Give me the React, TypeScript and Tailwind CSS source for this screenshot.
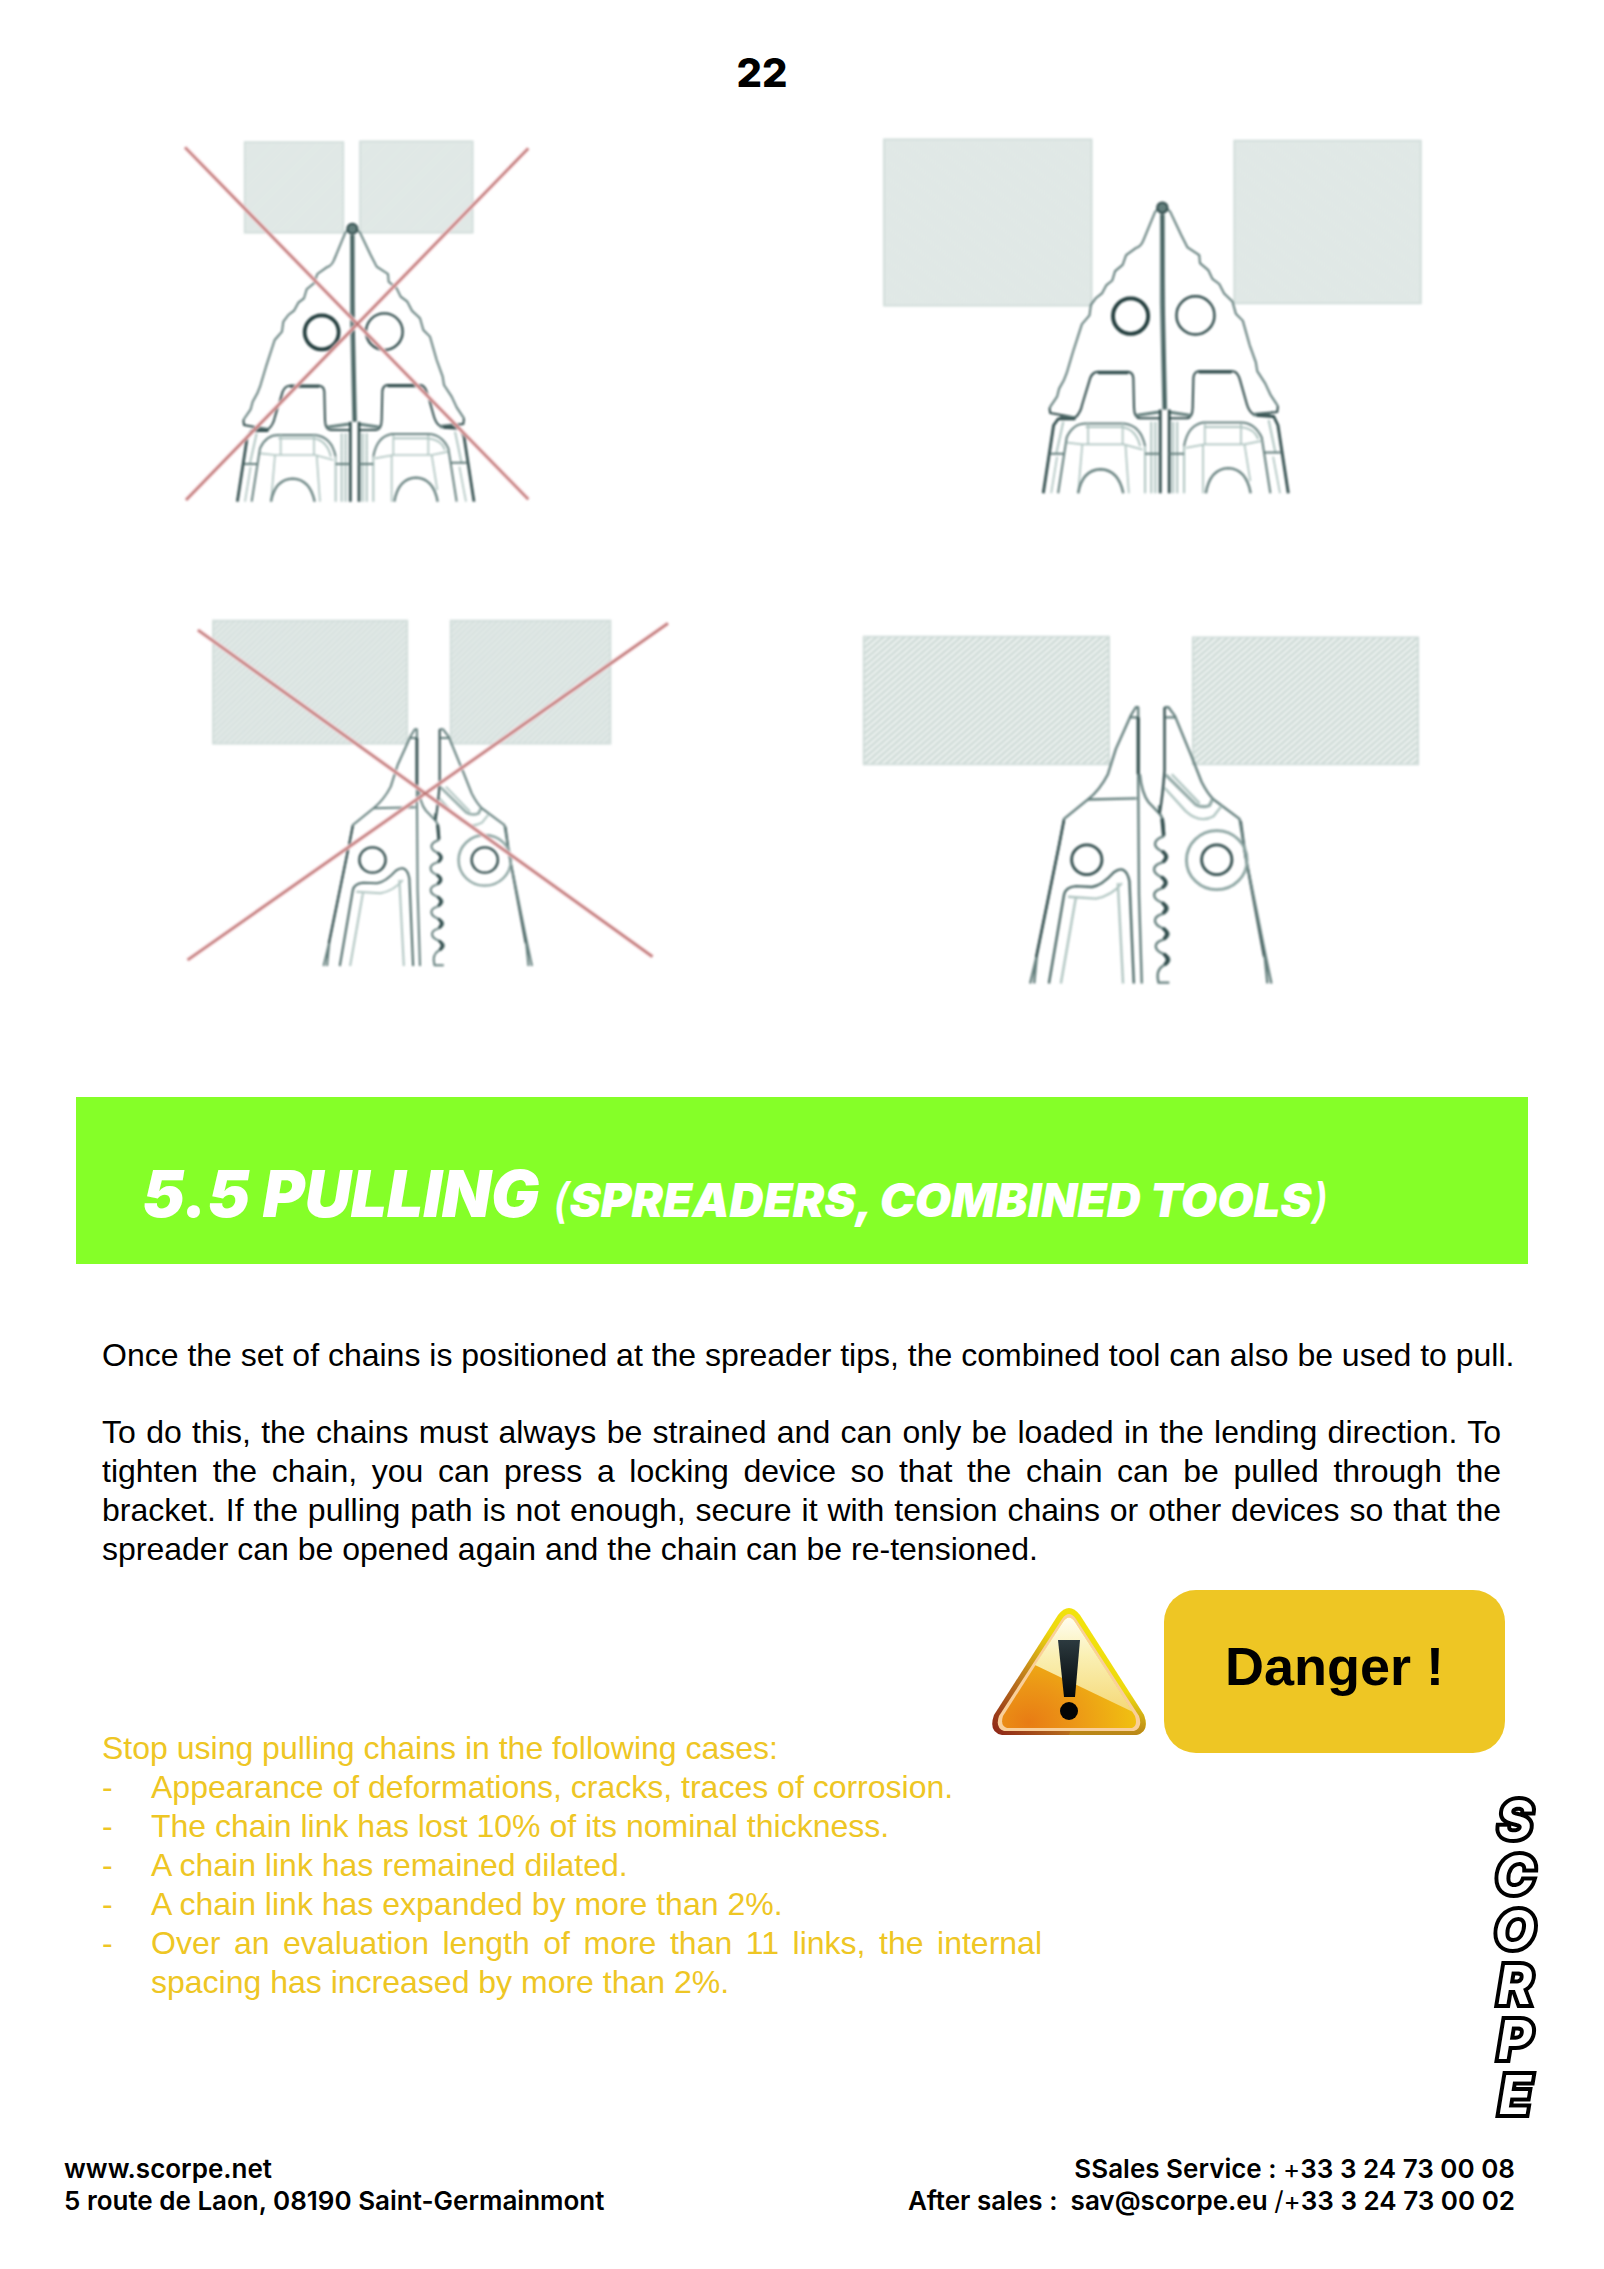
import React from "react";

const INK = "#647f7d";
const DARK = "#2f4b4b";
const LIGHT = "#b0c5c1";

function ClosedTips({ transform }: { transform?: string }) {
  return (
    <g transform={transform} fill="none" stroke={INK} strokeWidth="6" strokeLinejoin="round">
      <path d="M575 318 L556 338 L522 420 Q515 438 500 442 L472 462 L462 490 L440 508 L432 535 L415 548 L402 572 L385 585 L370 605 L366 635 L344 660 L318 740 L300 800 L292 820 L278 845 L272 868 L250 900" />
      <path d="M578 318 L600 338 L632 405 L650 440 L684 462 L686 485 L710 505 L722 530 L742 545 L756 572 L780 595 L790 630 L810 650 L830 720 L848 770 L852 795 L875 830 L890 862 L912 895" />
      <path d="M250 900 L252 915 L325 928 Q340 915 345 890 L368 815 Q375 797 390 797 H478 Q492 799 493 815 L495 900 Q496 930 512 930 H568" stroke={DARK} />
      <path d="M912 895 L910 912 L840 918 Q828 910 822 890 L802 820 Q795 795 780 795 H682 Q668 797 667 815 L665 900 Q664 930 648 930 H595" stroke={DARK} />
      <path d="M390 799 H478 M682 797 H778" stroke={DARK} strokeWidth="9" />
      <path d="M280 928 H325 M840 920 H890 M500 922 L568 912 M660 922 L595 912" strokeWidth="9" />
      <circle cx="577" cy="326" r="15" fill={INK} stroke={DARK} />
      <path d="M577 345 V600 L584 905" strokeWidth="14" />
      <path d="M577 345 L581 600 L584 905" stroke={DARK} strokeWidth="4" />
      <path d="M571 905 V1145 M597 905 V1145" stroke={DARK} strokeWidth="8" />
      <circle cx="485" cy="637" r="51" stroke="#1f3a3a" strokeWidth="11" />
      <circle cx="673" cy="635" r="55" stroke={DARK} strokeWidth="7" />
      <path d="M325 932 H275 L262 950 L232 1145 M850 922 L900 925 L912 950 L942 1145" stroke={DARK} strokeWidth="8" />
      <path d="M275 1145 L300 985 Q318 945 355 945 H465 Q515 950 527 1010 M890 1145 L865 985 Q845 943 805 942 H695 Q650 950 640 1010" />
      <path d="M290 940 L270 1030 M885 935 L905 1030 M355 955 H460 Q500 960 513 1010 M700 955 H805 Q845 960 855 990 M545 940 V1145 M620 940 V1145 M557 940 V1145 M608 940 V1145 M527 1010 V1145 M640 1010 V1145" stroke={LIGHT} />
      <path d="M252 1032 H292 M527 1032 H570 M597 1032 H640 M872 1028 H920" />
      <path d="M362 945 V1005 M462 945 V1005 M300 1000 L345 1005 H465 L520 1020 M345 1005 L333 1145 M470 1005 L480 1145 M700 945 V1005 M805 945 V1005 M645 1015 L700 1005 H815 L865 995 M695 1005 V1145 M815 1005 L832 1110 M255 1145 L272 1040 M918 1145 L898 1040" stroke={LIGHT} strokeWidth="5" />
      <path d="M333 1145 Q345 1078 398 1076 Q450 1078 464 1145 M703 1145 Q715 1075 768 1073 Q820 1075 833 1145" strokeWidth="7" />
    </g>
  );
}

function OpenTips({ transform }: { transform?: string }) {
  return (
    <g transform={transform} fill="none" stroke={INK} strokeWidth="6" strokeLinejoin="round">
      <path d="M748 418 H740 L728 438 L690 525 L670 590 Q650 630 620 655 L560 705 L548 770 L492 1055 L475 1128 M492 1055 L485 1128" />
      <path d="M560 708 L548 770 L490 1060 M1003 710 L1015 800 L1062 1060" stroke={DARK} />
      <path d="M726 444 H748 M815 444 H838 M620 655 L742 652" />
      <path d="M746 418 V620 L748 900 L755 1128" />
      <path d="M746 444 V590" stroke={DARK} strokeWidth="8" />
      <path d="M750 590 Q755 640 772 662 L800 692 L798 670" stroke={INK} />
      <path d="M812 418 H822 L838 440 L880 545 L905 610 Q920 640 935 655 L1000 705 L1015 800 L1065 1055 L1080 1128 M1063 1055 L1070 1128" />
      <path d="M812 418 V580 Q808 640 800 690" stroke={DARK} />
      <path d="M800 692 Q812 705 809 750 c-28 10 -26 28 -4 38 s14 24 -2 30 c-24 8 -22 26 0 36 s16 24 0 30 c-24 8 -22 26 2 36 s16 24 0 30 c-24 8 -22 26 2 36 s16 24 0 30 c-24 8 -22 26 2 36 s16 24 0 30 q-20 12 -12 44 H824" />
      <path d="M806 788 q18 14 2 28 M804 854 q20 14 2 28 M806 920 q18 14 2 28 M808 986 q18 14 2 28 M810 1052 q18 14 2 28 M806 704 L810 748" stroke={DARK} strokeWidth="9" />
      <path d="M815 592 L890 668 Q908 678 925 670 L932 655" stroke="#93aaa7" strokeWidth="8" />
      <path d="M812 625 L865 685 Q900 718 935 698 L955 672 M830 590 L900 665" stroke={LIGHT} />
      <circle cx="617" cy="810" r="38" stroke={DARK} strokeWidth="7" />
      <circle cx="943" cy="810" r="38" stroke={DARK} strokeWidth="7" />
      <circle cx="943" cy="811" r="76" strokeWidth="7" stroke="#8aa3a0" />
      <path d="M522 1128 L560 900 Q564 880 590 878 L630 880 Q655 876 685 842 Q715 820 724 865 L735 1128" stroke="#4d6a68" />
      <path d="M552 1128 L590 905 M570 905 L640 910 Q680 902 705 870 M695 870 L708 1128" stroke={LIGHT} />
    </g>
  );
}

function Blocks({ id, d, gap, base, tone }: { id: string; d: string; gap: number; base: string; tone: string }) {
  return (
    <>
      <defs>
        <pattern id={id} width={gap} height={gap} patternUnits="userSpaceOnUse" patternTransform="rotate(45)">
          <rect width={gap} height={gap} fill={base} />
          <rect width={gap / 2} height={gap} fill={tone} />
        </pattern>
      </defs>
      <path d={d} fill={`url(#${id})`} stroke="#d0dcd9" strokeWidth="5" />
    </>
  );
}

function Cross({ d }: { d: string }) {
  return (
    <>
      <path d={d} stroke="#f8d5da" strokeWidth="13" />
      <path d={d} stroke="#b9716f" strokeWidth="6" />
    </>
  );
}

function WarningSign() {
  return (
    <svg viewBox="0 0 154 127" className="h-[127px] w-[154px] shrink-0" role="img" aria-label="Warning">
      <defs>
        <linearGradient id="rim" x1="0" y1="1" x2="0.75" y2="0.3">
          <stop offset="0" stopColor="#8c2318" />
          <stop offset="0.45" stopColor="#c07d1c" />
          <stop offset="0.8" stopColor="#ecd60e" />
          <stop offset="1" stopColor="#f2e20c" />
        </linearGradient>
        <linearGradient id="rimRight" x1="0" y1="0" x2="0" y2="1">
          <stop offset="0.5" stopColor="#c59a1a" stopOpacity="0" />
          <stop offset="1" stopColor="#b98618" />
        </linearGradient>
        <radialGradient id="face" cx="0.2" cy="0.95" r="0.85">
          <stop offset="0" stopColor="#e87c14" />
          <stop offset="0.4" stopColor="#ec9716" />
          <stop offset="1" stopColor="#f1c511" />
        </radialGradient>
        <linearGradient id="gloss" x1="0" y1="0" x2="0" y2="1">
          <stop offset="0" stopColor="#fffdf0" />
          <stop offset="0.4" stopColor="#faf0b4" />
          <stop offset="1" stopColor="#f5d877" />
        </linearGradient>
        <linearGradient id="mark" x1="0" y1="0" x2="0" y2="1">
          <stop offset="0" stopColor="#2c3a3f" />
          <stop offset="1" stopColor="#04080a" />
        </linearGradient>
      </defs>
      <path d="M66 7 Q77 -7 88 7 L152 107 Q158 124 144 127 H10 Q-4 124 2 107 Z" fill="url(#rim)" />
      <path d="M110 40 L152 107 Q158 124 144 127 H77 Z" fill="url(#rimRight)" />
      <path d="M70 11 Q77 1 84 11 L147 108 Q151 120 142 123 H12 Q3 120 7 108 Z" fill="#f9cf9a" />
      <path d="M71 14 Q77 5 83 14 L143 108 Q146 118 140 120 H15 Q8 118 11 108 Z" fill="url(#face)" />
      <path d="M71 14 Q77 5 83 14 L141 104 L43 57 Z" fill="url(#gloss)" />
      <path d="M66 32 H88 L83 89 H72 Z" fill="url(#mark)" />
      <circle cx="77" cy="103" r="9" fill="#020405" />
    </svg>
  );
}

const cases = [
  "Appearance of deformations, cracks, traces of corrosion.",
  "The chain link has lost 10% of its nominal thickness.",
  "A chain link has remained dilated.",
  "A chain link has expanded by more than 2%.",
  "Over an evaluation length of more than 11 links, the internal spacing has increased by more than 2%.",
];

export default function App() {
  return (
    <main className="flex min-h-screen flex-col bg-white font-['Liberation_Sans',Arial,sans-serif] text-black">
      <header className="flex h-[120px] items-center justify-center pt-[26px] pr-20 font-['Inter',sans-serif] text-[40px] leading-none font-extrabold">
        22
      </header>

      <section className="flex flex-col gap-[70px] pr-[164px] pl-40" aria-label="Positioning of the tips">
        <div className="flex justify-between">
          <svg viewBox="0 0 1200 1200" className="h-[400px] w-[400px] blur-[1px]" role="img" aria-label="Incorrect: blocks held at the tip end">
            <Blocks id="h1" gap={8} base="#e4ebe9" tone="#dde6e3" d="M254 66 H550 V338 H254 Z M600 64 H938 V338 H600 Z" />
            <ClosedTips />
            <Cross d="M75 82 L1105 1138 M1105 85 L78 1140" />
          </svg>
          <svg viewBox="0 0 1568 1200" preserveAspectRatio="none" className="h-[400px] w-[580px] blur-[1px]" role="img" aria-label="Correct: blocks held along the jaws">
            <Blocks id="h2" gap={8} base="#e4ebe9" tone="#dde6e3" d="M65 58 H626 V557 H65 Z M1012 62 H1516 V550 H1012 Z" />
            <ClosedTips transform="matrix(0.933 0 0 1.046 279 -78)" />
          </svg>
        </div>
        <div className="flex justify-between">
          <svg viewBox="0 0 1568 1200" preserveAspectRatio="none" className="h-[400px] w-[540px] blur-[1px]" role="img" aria-label="Incorrect: open tips barely engaged">
            <Blocks id="h3" gap={12} base="#e4ebe9" tone="#d5e0dd" d="M154 92 H718 V461 H154 Z M844 92 H1308 V461 H844 Z" />
            <OpenTips />
            <Cross d="M110 120 L1430 1100 M1475 100 L80 1110" />
          </svg>
          <svg viewBox="0 -30 1568 1230" preserveAspectRatio="none" className="h-[410px] w-[600px] blur-[1px]" role="img" aria-label="Correct: open tips fully engaged">
            <Blocks id="h4" gap={13} base="#eff4f2" tone="#cbd8d4" d="M62 110 H703 V493 H62 Z M922 112 H1511 V493 H922 Z" />
            <OpenTips transform="matrix(1.042 0 0 1.167 2 -166)" />
          </svg>
        </div>
      </section>

      <h1 className="mt-[97px] mr-[76px] ml-[76px] flex h-[167px] items-center bg-[#85ff28] pt-[26px] pl-[66px] font-['Inter',sans-serif] text-[64px] leading-none font-black whitespace-nowrap text-white italic">
        <span>
          5.5 PULLING{" "}
          <span className="text-[47px]">
            <span className="font-medium">(</span>SPREADERS, COMBINED TOOLS<span className="font-medium">)</span>
          </span>
        </span>
      </h1>

      <section className="mt-[72px] pr-[103px] pl-[102px] text-[32px] leading-[39px]">
        <p className="whitespace-nowrap">
          Once the set of chains is positioned at the spreader tips, the combined tool can also be used to pull.
        </p>
        <p className="mt-[38px] text-justify">
          To do this, the chains must always be strained and can only be loaded in the lending direction. To tighten the chain, you can press a locking device so that the chain can be pulled through the bracket. If the pulling path is not enough, secure it with tension chains or other devices so that the spreader can be opened again and the chain can be re-tensioned.
        </p>
      </section>

      <section className="mt-[21px] flex justify-between pr-[67px] pl-[102px]">
        <div className="mt-[139px] w-[940px] text-[32px] leading-[39px] text-[#eec624]">
          <p>Stop using pulling chains in the following cases:</p>
          <ul>
            {cases.map((text) => (
              <li key={text} className="flex text-justify">
                <span className="w-[49px] shrink-0">-</span>
                <span>{text}</span>
              </li>
            ))}
          </ul>
        </div>
        <div className="-ml-[60px] flex flex-col items-end">
          <div className="flex items-center gap-[18px] pr-8">
            <WarningSign />
            <div className="flex h-[163px] w-[341px] items-center justify-center rounded-[32px] bg-[#eec624] pb-2.5 text-[54px] font-bold">
              Danger !
            </div>
          </div>
          <p className="mt-10 w-11 text-center font-['Inter',sans-serif] text-[53px] leading-[55px] font-bold break-all text-white italic [-webkit-text-stroke:8px_#000] [paint-order:stroke_fill]">
            SCORPE
          </p>
        </div>
      </section>

      <footer className="mt-auto flex justify-between pr-[89px] pb-[52px] pl-16 font-['Inter',sans-serif] text-[26px] leading-8 font-semibold">
        <address className="not-italic">
          <a href="https://www.scorpe.net">www.scorpe.net</a>
          <br />5 route de Laon, 08190 Saint-Germainmont
        </address>
        <p className="text-right">
          SSales Service : <span className="font-normal">+</span>33 3 24 73 00 08
          <br />
          After sales :&nbsp; <a href="mailto:sav@scorpe.eu">sav@scorpe.eu</a> <span className="font-normal">/+</span>33 3 24 73 00 02
        </p>
      </footer>
    </main>
  );
}
